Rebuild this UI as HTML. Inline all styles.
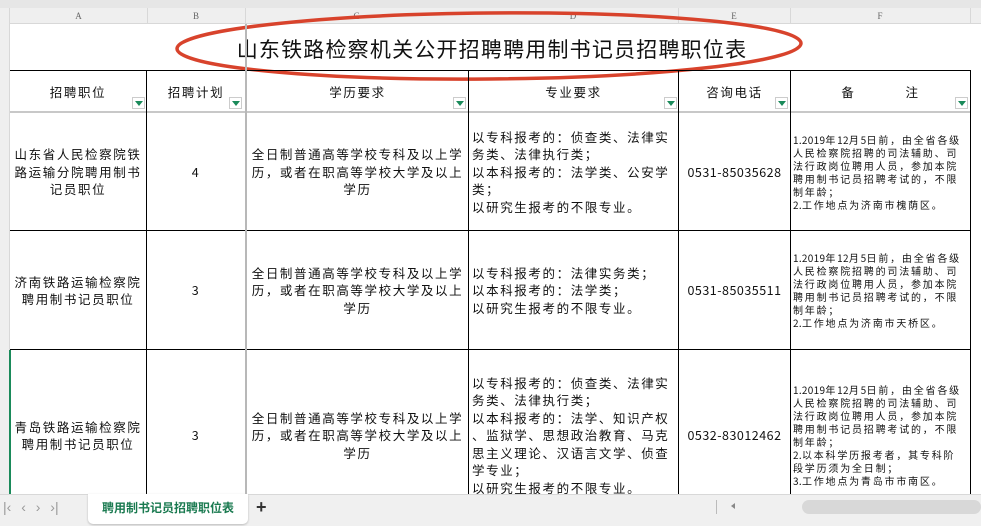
<!DOCTYPE html>
<html><head><meta charset="utf-8"><style>
*{margin:0;padding:0;box-sizing:border-box}
body{width:981px;height:526px;overflow:hidden;background:#fff;position:relative;font-family:"Liberation Sans","Noto Sans CJK SC",sans-serif;color:#111}
.a{position:absolute}
.hl{position:absolute;height:1px;background:#000}
.vl{position:absolute;width:1px;background:#000}
.c{position:absolute;display:flex;align-items:center;justify-content:center;text-align:center;font-size:12.5px;letter-spacing:1.6px;line-height:17.5px;font-family:"Noto Sans CJK SC",sans-serif;white-space:nowrap}
.l{justify-content:flex-start;text-align:left;padding-left:3px}
.n{font-size:10px;letter-spacing:1.8px;line-height:13px;justify-content:flex-start;text-align:left;padding-left:2px;overflow:hidden}
.n b{font-weight:normal;letter-spacing:0.3px}
.dd{position:absolute;width:13px;height:12px;border:1px solid #ccc;background:#fff}
.dd:after{content:"";position:absolute;left:2px;top:3px;border-left:4px solid transparent;border-right:4px solid transparent;border-top:5px solid #1a8a5a}
.ch{position:absolute;top:8px;height:16px;font-size:9px;color:#666;text-align:center;line-height:16px;font-family:"Liberation Serif",serif}
</style></head><body>
<div class="a" style="left:0;top:0;width:981px;height:8px;background:#e6e6e6"></div>
<div class="a" style="left:0;top:8px;width:981px;height:16px;background:#efefef;border-bottom:1px solid #d8d8d8"></div>
<div class="a" style="left:0;top:8px;width:10px;height:486px;background:#efefef;border-right:1px solid #d8d8d8"></div>
<div class="ch" style="left:10px;width:137px">A</div>
<div class="ch" style="left:147px;width:98px">B</div>
<div class="ch" style="left:245px;width:223px">C</div>
<div class="ch" style="left:468px;width:210px">D</div>
<div class="ch" style="left:678px;width:112px">E</div>
<div class="ch" style="left:790px;width:180px">F</div>
<div class="a" style="left:147px;top:8px;width:1px;height:16px;background:#d8d8d8"></div>
<div class="a" style="left:245px;top:8px;width:1px;height:16px;background:#d8d8d8"></div>
<div class="a" style="left:678px;top:8px;width:1px;height:16px;background:#d8d8d8"></div>
<div class="a" style="left:790px;top:8px;width:1px;height:16px;background:#d8d8d8"></div>
<div class="a" style="left:970px;top:8px;width:1px;height:16px;background:#d8d8d8"></div>

<div class="a" style="left:202px;top:35px;width:580px;text-align:center;font-size:21px;letter-spacing:1.2px;font-family:'Noto Sans CJK SC',sans-serif;line-height:28px;white-space:nowrap">山东铁路检察机关公开招聘聘用制书记员招聘职位表</div>
<svg class="a" style="left:0;top:0" width="981" height="120"><ellipse cx="489" cy="46" rx="312" ry="33" fill="none" stroke="#d8432c" stroke-width="3.5" transform="rotate(-0.5 489 46)"/></svg>

<div class="hl" style="left:10px;top:70px;width:961px"></div>
<div class="hl" style="left:10px;top:111px;width:961px;height:2px;background:#c8c8c8"></div>
<div class="hl" style="left:10px;top:230px;width:961px"></div>
<div class="hl" style="left:10px;top:349px;width:961px"></div>
<div class="vl" style="left:146px;top:70px;height:424px"></div>
<div class="vl" style="left:245px;top:24px;height:470px;width:2px;background:#b8b8b8"></div>
<div class="vl" style="left:468px;top:70px;height:424px"></div>
<div class="vl" style="left:678px;top:70px;height:424px"></div>
<div class="vl" style="left:790px;top:70px;height:424px"></div>
<div class="vl" style="left:970px;top:70px;height:424px"></div>
<div class="a" style="left:9px;top:350px;width:2px;height:144px;background:#1a8a5a"></div>

<div class="c" style="left:10px;top:78px;width:136px;height:28px">招聘职位</div>
<div class="c" style="left:147px;top:78px;width:98px;height:28px">招聘计划</div>
<div class="c" style="left:247px;top:78px;width:221px;height:28px">学历要求</div>
<div class="c" style="left:469px;top:78px;width:209px;height:28px">专业要求</div>
<div class="c" style="left:679px;top:78px;width:111px;height:28px">咨询电话</div>
<div class="c" style="left:791px;top:78px;width:179px;height:28px">备<span style="display:inline-block;width:50px"></span>注</div>
<div class="dd" style="left:132px;top:97px"></div>
<div class="dd" style="left:229px;top:97px"></div>
<div class="dd" style="left:453px;top:97px"></div>
<div class="dd" style="left:664px;top:97px"></div>
<div class="dd" style="left:775px;top:97px"></div>
<div class="dd" style="left:955px;top:97px"></div>

<div class="c" style="left:10px;top:113px;width:136px;height:117px">山东省人民检察院铁<br>路运输分院聘用制书<br>记员职位</div>
<div class="c" style="left:147px;top:113px;width:98px;height:117px">4</div>
<div class="c" style="left:247px;top:113px;width:221px;height:117px">全日制普通高等学校专科及以上学<br>历，或者在职高等学校大学及以上<br>学历</div>
<div class="c l" style="left:469px;top:113px;width:209px;height:117px">以专科报考的：侦查类、法律实<br>务类、法律执行类；<br>以本科报考的：法学类、公安学<br>类；<br>以研究生报考的不限专业。</div>
<div class="c" style="left:679px;top:113px;width:111px;height:117px;letter-spacing:0.5px">0531-85035628</div>
<div class="c n" style="left:791px;top:113px;width:179px;height:117px"><div><b>1.2019</b>年<b>12</b>月<b>5</b>日前，由全省各级<br>人民检察院招聘的司法辅助、司<br>法行政岗位聘用人员，参加本院<br>聘用制书记员招聘考试的，不限<br>制年龄；<br><b>2.</b>工作地点为济南市槐荫区。</div></div>

<div class="c" style="left:10px;top:231px;width:136px;height:118px">济南铁路运输检察院<br>聘用制书记员职位</div>
<div class="c" style="left:147px;top:231px;width:98px;height:118px">3</div>
<div class="c" style="left:247px;top:231px;width:221px;height:118px">全日制普通高等学校专科及以上学<br>历，或者在职高等学校大学及以上<br>学历</div>
<div class="c l" style="left:469px;top:231px;width:209px;height:118px">以专科报考的：法律实务类；<br>以本科报考的：法学类；<br>以研究生报考的不限专业。</div>
<div class="c" style="left:679px;top:231px;width:111px;height:118px;letter-spacing:0.5px">0531-85035511</div>
<div class="c n" style="left:791px;top:231px;width:179px;height:118px"><div><b>1.2019</b>年<b>12</b>月<b>5</b>日前，由全省各级<br>人民检察院招聘的司法辅助、司<br>法行政岗位聘用人员，参加本院<br>聘用制书记员招聘考试的，不限<br>制年龄；<br><b>2.</b>工作地点为济南市天桥区。</div></div>

<div class="c" style="left:10px;top:350px;width:136px;height:170px">青岛铁路运输检察院<br>聘用制书记员职位</div>
<div class="c" style="left:147px;top:350px;width:98px;height:170px">3</div>
<div class="c" style="left:247px;top:350px;width:221px;height:170px">全日制普通高等学校专科及以上学<br>历，或者在职高等学校大学及以上<br>学历</div>
<div class="c l" style="left:469px;top:350px;width:209px;height:170px">以专科报考的：侦查类、法律实<br>务类、法律执行类；<br>以本科报考的：法学、知识产权<br>、监狱学、思想政治教育、马克<br>思主义理论、汉语言文学、侦查<br>学专业；<br>以研究生报考的不限专业。</div>
<div class="c" style="left:679px;top:350px;width:111px;height:170px;letter-spacing:0.5px">0532-83012462</div>
<div class="c n" style="left:791px;top:350px;width:179px;height:170px"><div><b>1.2019</b>年<b>12</b>月<b>5</b>日前，由全省各级<br>人民检察院招聘的司法辅助、司<br>法行政岗位聘用人员，参加本院<br>聘用制书记员招聘考试的，不限<br>制年龄；<br><b>2.</b>以本科学历报考者，其专科阶<br>段学历须为全日制；<br><b>3.</b>工作地点为青岛市市南区。</div></div>

<div class="a" style="left:0;top:494px;width:981px;height:32px;background:#f0f0f0;border-top:1px solid #d8d8d8"></div>
<div class="a" style="left:3px;top:499px;font-size:14px;color:#999;word-spacing:6px;white-space:nowrap">|‹ ‹ › ›|</div>
<div class="a" style="left:88px;top:494px;width:160px;height:30px;background:#fff;border-radius:0 0 5px 5px;box-shadow:0 1px 2px #bbb"></div>
<div class="a" style="left:88px;top:494px;width:160px;height:28px;font-size:12px;color:#1a7a50;font-weight:bold;text-align:center;line-height:28px;font-family:'Noto Sans CJK SC',sans-serif">聘用制书记员招聘职位表</div>
<div class="a" style="left:256px;top:497px;font-size:18px;font-weight:bold;color:#333">+</div>
<div class="a" style="left:716px;top:500px;width:1px;height:14px;background:#bbb"></div>
<div class="a" style="left:731px;top:503px;border-right:4px solid #888;border-top:3px solid transparent;border-bottom:3px solid transparent"></div>
<div class="a" style="left:802px;top:500px;width:179px;height:14px;background:#d8d8d8;border-radius:7px"></div>
</body></html>
